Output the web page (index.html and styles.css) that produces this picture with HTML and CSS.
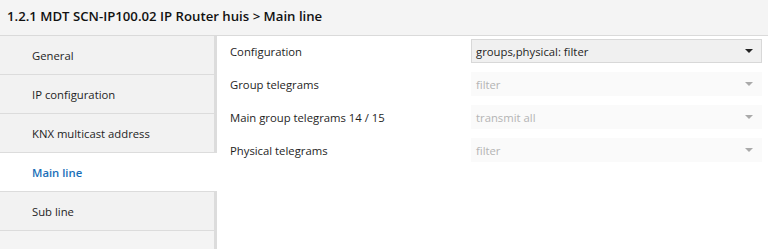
FILE: index.html
```html
<!DOCTYPE html>
<html lang="en">
<head>
  <meta charset="UTF-8" />
  <meta name="viewport" content="width=device-width, initial-scale=1.0"/>
  <title>Main line</title>
  <link rel="stylesheet" href="styles.css">
</head>
<body>

  <div class="title-bar">1.2.1 MDT SCN-IP100.02 IP Router huis &gt; Main line</div>

  <div class="main">
    <!-- Parameter pages -->
    <div class="sidebar">
      <div class="nav-item">General</div>
      <div class="nav-item">IP configuration</div>
      <div class="nav-item">KNX multicast address</div>
      <div class="nav-item selected">Main line</div>
      <div class="nav-item">Sub line</div>
    </div>

    <!-- Parameters -->
    <div class="params">
      <div class="param-row">
        <div class="param-label">Configuration</div>
        <div class="select">
          <span>groups,physical: filter</span>
          <span class="arrow"></span>
        </div>
      </div>
      <div class="param-row">
        <div class="param-label">Group telegrams</div>
        <div class="select disabled">
          <span>filter</span>
          <span class="arrow"></span>
        </div>
      </div>
      <div class="param-row">
        <div class="param-label">Main group telegrams 14 / 15</div>
        <div class="select disabled">
          <span>transmit all</span>
          <span class="arrow"></span>
        </div>
      </div>
      <div class="param-row">
        <div class="param-label">Physical telegrams</div>
        <div class="select disabled">
          <span>filter</span>
          <span class="arrow"></span>
        </div>
      </div>
    </div>
  </div>

</body>
</html>
```

FILE: styles.css
```css
body {
  margin: 0;
  font-family: "Open Sans", "Noto Sans", sans-serif;
  font-size: 11.3px;
  color: #1e1e1e;
  background-color: #ffffff;
  height: 249px;
  overflow: hidden;
}

.title-bar {
  height: 35px;
  line-height: 33px;
  padding-left: 7px;
  background-color: #f4f4f4;
  border-bottom: 1px solid #dadada;
  font-size: 13.2px;
  font-weight: 600;
  color: #111;
}

.main {
  display: flex;
  height: 213px;
}

.sidebar {
  width: 214px;
  background-color: #f4f4f4;
  border-right: 3px solid #dcdcdc;
}

.nav-item {
  height: 38px;
  line-height: 40px;
  padding-left: 32px;
  background-color: #f2f2f2;
  border-bottom: 1px solid #dcdcdc;
}

.nav-item.selected {
  background-color: #ffffff;
  margin-right: -3px;
  color: #1a6fb8;
  font-weight: 600;
}

.params {
  flex: 1;
  padding: 3px 6px 0 13px;
}

.param-row {
  display: flex;
  align-items: center;
  height: 24px;
  margin-bottom: 9px;
}

.param-label {
  width: 241px;
}

.select {
  flex: 1;
  display: flex;
  justify-content: space-between;
  align-items: center;
  height: 22px;
  padding: 0 8px 0 4px;
  background-color: #f0f0f0;
  border: 1px solid #d8d8d8;
}

.select.disabled {
  background-color: #fafafa;
  border-color: #fafafa;
  color: #b4b4b4;
}

.arrow {
  width: 0;
  height: 0;
  border-left: 4px solid transparent;
  border-right: 4px solid transparent;
  border-top: 4px solid #222;
}

.select.disabled .arrow {
  border-top-color: #aaa;
}
```
